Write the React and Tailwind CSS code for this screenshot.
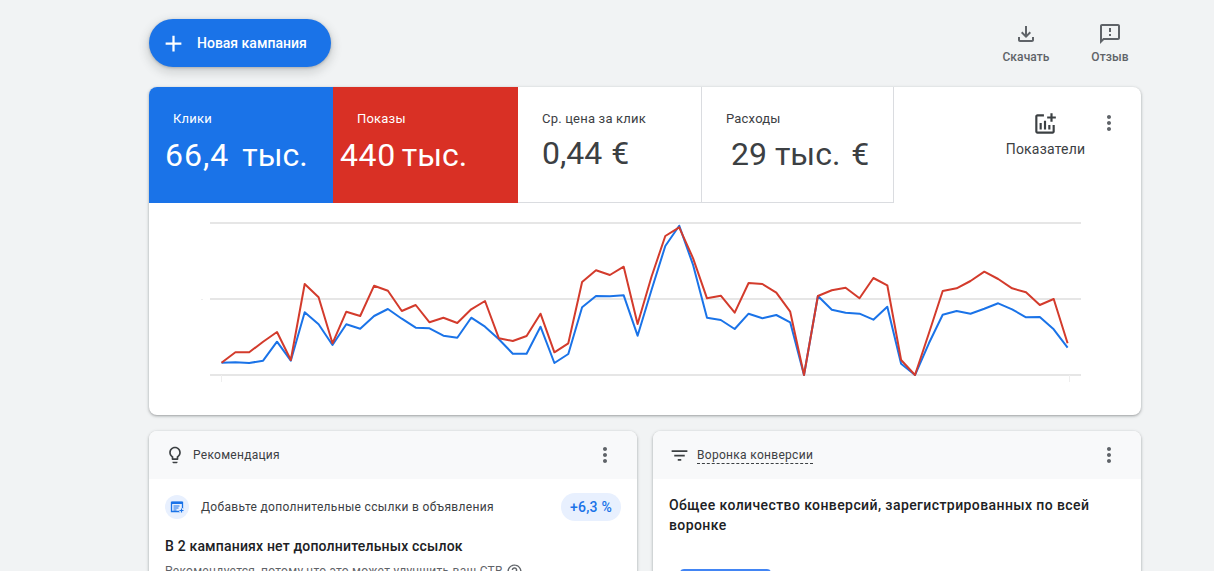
import React from "react";

const roboto = "font-['Roboto',sans-serif]";

// chart values, x index -> y in px from the top of the svg
const redLine = [458,427,427,395,366,450,222,262,400,305,318,227,242,303,285,337,323,339,298,273,385,393,378,311,427,400,216,181,195,170,342,200,78,52,145,265,257,308,219,222,248,305,495,258,241,233,265,204,226,450,495,370,243,235,213,185,207,235,247,285,267,400];
const blueLine = [458,457,459,452,395,452,307,343,405,343,356,318,297,326,353,355,377,383,323,350,388,431,431,350,459,432,292,258,259,256,377,240,108,47,165,323,330,357,311,325,315,337,495,258,299,308,311,329,290,461,495,400,314,303,311,296,280,298,322,321,358,413];

const toPoints = (vals) =>
  vals.map((v, i) => `${(72.5 + i * 13.87).toFixed(1)},${(7 + v / 3).toFixed(1)}`).join(" ");

const MoreIcon = () => (
  <svg viewBox="0 0 24 24" className="w-6 h-6 fill-[#5f6368]">
    <path d="M12 8c1.1 0 2-.9 2-2s-.9-2-2-2-2 .9-2 2 .9 2 2 2zm0 2c-1.1 0-2 .9-2 2s.9 2 2 2 2-.9 2-2-.9-2-2-2zm0 6c-1.1 0-2 .9-2 2s.9 2 2 2 2-.9 2-2-.9-2-2-2z" />
  </svg>
);

const Metric = ({ label, value, unit, className, valueClass, numClass }) => (
  <div className={`h-[116px] shrink-0 flex flex-col ${className}`}>
    <div className="mt-[23px] pl-6 text-[13px] leading-[18px] tracking-[0.2px]">{label}</div>
    <div className={`text-[32px] leading-[40px] whitespace-nowrap flex ${valueClass}`}>
      <span className={numClass}>{value}</span>
      <span>{unit}</span>
    </div>
  </div>
);

const Chart = () => (
  <svg viewBox="0 0 992 212" className="w-[992px] h-[212px] block">
    <g stroke="#e6e6e6" strokeWidth="2">
      <line x1="61" y1="20" x2="932" y2="20" />
      <line x1="61" y1="96" x2="932" y2="96" />
      <line x1="61" y1="172" x2="932" y2="172" />
    </g>
    <g stroke="#eeeeee" strokeWidth="1">
      <line x1="72.5" y1="172" x2="72.5" y2="179" />
      <line x1="920.5" y1="172" x2="920.5" y2="179" />
      <line x1="52" y1="96.5" x2="54" y2="96.5" />
    </g>
    <polyline points={toPoints(blueLine)} fill="none" stroke="#1a73e8" strokeWidth="2" strokeLinejoin="round" />
    <polyline points={toPoints(redLine)} fill="none" stroke="#d33b2c" strokeWidth="2" strokeLinejoin="round" />
  </svg>
);

const SmallCard = ({ header, children }) => (
  <div className="w-[488px] h-[200px] bg-white rounded-lg shadow-[0_1px_2px_rgba(60,64,67,0.3),0_1px_3px_1px_rgba(60,64,67,0.15)] overflow-hidden shrink-0">
    <div className="h-12 bg-[#f8f9fa] flex items-center pl-4 pr-5">
      {header}
      <div className="ml-auto"><MoreIcon /></div>
    </div>
    {children}
  </div>
);

export default function App() {
  return (
    <div className={`h-[571px] w-[1214px] overflow-hidden bg-[#f1f3f4] pl-[149px] ${roboto}`}>
      <div className="w-[992px]">
        {/* top row */}
        <div className="h-[87px] flex items-start">
          <button className="mt-[19px] h-12 w-[182px] rounded-full bg-[#1a73e8] text-white flex items-center pl-[11px] shadow-[0_1px_3px_rgba(60,64,67,0.3),0_4px_8px_3px_rgba(60,64,67,0.15)]">
            <svg viewBox="0 0 24 24" className="w-[27px] h-[27px] fill-white shrink-0">
              <path d="M19 13h-6v6h-2v-6H5v-2h6V5h2v6h6v2z" />
            </svg>
            <span className="ml-[10px] text-[14px] font-medium">Новая кампания</span>
          </button>
          <div className="ml-auto flex mt-[22px] text-[12px] font-medium text-[#5f6368]">
            <div className="w-[106px] flex flex-col items-center">
              <svg viewBox="0 0 24 24" className="w-6 h-6 fill-[#5f6368]">
                <path d="M18 15v3H6v-3H4v3c0 1.1.9 2 2 2h12c1.1 0 2-.9 2-2v-3h-2zm-1-4l-1.41-1.41L13 12.17V4h-2v8.17L8.41 9.59 7 11l5 5 5-5z" />
              </svg>
              <span className="mt-[2px] leading-[18px] tracking-[0.1px]">Скачать</span>
            </div>
            <div className="w-[62px] flex flex-col items-center">
              <svg viewBox="0 0 24 24" className="w-6 h-6 fill-[#5f6368]">
                <path d="M20 2H4c-1.1 0-1.99.9-1.99 2L2 22l4-4h14c1.1 0 2-.9 2-2V4c0-1.1-.9-2-2-2zm0 14H5.17L4 17.17V4h16v12zm-9-4h2v2h-2zm0-6h2v4h-2z" />
              </svg>
              <span className="mt-[2px] leading-[18px] tracking-[0.1px]">Отзыв</span>
            </div>
          </div>
        </div>

        {/* main card */}
        <div className="h-[328px] bg-white rounded-lg shadow-[0_1px_2px_rgba(60,64,67,0.3),0_1px_3px_1px_rgba(60,64,67,0.15)] overflow-hidden">
          <div className="flex h-[116px]">
            <Metric label="Клики" value="66,4" unit="тыс." className="w-[184px] bg-[#1a73e8] text-white" valueClass="mt-[7px] pl-[16px] gap-[13px]" numClass="tracking-[1px]" />
            <Metric label="Показы" value="440" unit="тыс." className="w-[185px] bg-[#d93025] text-white" valueClass="mt-[7px] pl-[7px] gap-[6px]" numClass="tracking-[0.6px]" />
            <Metric label="Ср. цена за клик" value="0,44" unit="€" className="w-[183px] text-[#3c4043] border-b border-[#dadce0]" valueClass="mt-[5px] pl-6 gap-[9px]" />
            <Metric label="Расходы" value="29 тыс." unit="€" className="w-[193px] text-[#3c4043] border-x border-b border-[#dadce0]" valueClass="mt-[6px] pl-[29px] gap-[11px]" />
            <div className="flex-1 relative flex flex-col items-center pl-[56px]">
              <svg viewBox="0 0 24 24" className="mt-[24px] -ml-[2px] w-[26px] h-[26px] fill-[#3c4043]">
                <path d="M22 5v2h-3v3h-2V7h-3V5h3V2h2v3h3zm-3 14H5V5h6V3H5c-1.1 0-2 .9-2 2v14c0 1.1.9 2 2 2h14c1.1 0 2-.9 2-2v-6h-2v6zm-4-6v4h2v-4h-2zm-4 4h2V9h-2v8zm-2 0v-6H7v6h2z" />
              </svg>
              <span className="mt-[2px] text-[14px] leading-5 tracking-[0.2px] text-[#3c4043]">Показатели</span>
              <div className="absolute right-[20px] top-[24px]"><MoreIcon /></div>
            </div>
          </div>
          <Chart />
        </div>

        {/* bottom cards */}
        <div className="mt-4 flex gap-4">
          <SmallCard
            header={
              <>
                <svg viewBox="0 0 24 24" className="w-5 h-5 fill-[#3c4043]">
                  <path d="M9 21c0 .55.45 1 1 1h4c.55 0 1-.45 1-1v-1H9v1zm3-19C8.14 2 5 5.14 5 9c0 2.38 1.19 4.47 3 5.74V17c0 .55.45 1 1 1h6c.55 0 1-.45 1-1v-2.26c1.81-1.27 3-3.36 3-5.74 0-3.86-3.14-7-7-7zm2.85 11.1l-.85.6V16h-4v-2.3l-.85-.6C7.8 12.16 7 10.63 7 9c0-2.76 2.24-5 5-5s5 2.24 5 5c0 1.63-.8 3.16-2.15 4.1z" />
                </svg>
                <span className="ml-2 text-[12px] tracking-[0.27px] text-[#3c4043]">Рекомендация</span>
              </>
            }
          >
            <div className="px-4">
              <div className="mt-[14px] h-7 flex items-center">
                <div className="w-6 h-6 rounded-full bg-[#e8f0fe] flex items-center justify-center">
                  <svg viewBox="0 0 16 16" className="w-4 h-4">
                    <path d="M2.5 3.5h11v9h-11z" fill="none" stroke="#1a73e8" strokeWidth="1.3" />
                    <path d="M2.5 2.5h11v2.5h-11z" fill="#1a73e8" />
                    <path d="M4.5 7h6M4.5 9h5M4.5 11h3" stroke="#1a73e8" strokeWidth="1" />
                    <path d="M10 11.5h5M12.5 9v5" stroke="#e8f0fe" strokeWidth="2.6" />
                    <path d="M10.5 11.5h4M12.5 9.5v4" stroke="#1a73e8" strokeWidth="1.1" />
                  </svg>
                </div>
                <span className="ml-3 text-[12px] tracking-[0.32px] text-[#3c4043]">Добавьте дополнительные ссылки в объявления</span>
                <span className="ml-auto h-7 w-[60px] rounded-full bg-[#e8f0fe] flex items-center justify-center text-[14px] font-medium tracking-[0.2px] text-[#1a73e8]">+6,3 %</span>
              </div>
              <div className="mt-[15px] text-[14px] leading-5 font-medium tracking-[0.18px] text-[#202124]">В 2 кампаниях нет дополнительных ссылок</div>
              <div className="mt-[6px] flex items-center text-[12px] leading-[18px] tracking-[0.28px] text-[#5f6368]">
                Рекомендуется, потому что это может улучшить ваш CTR
                <svg viewBox="0 0 24 24" className="ml-[3px] w-[17px] h-[17px] fill-[#5f6368]">
                  <path d="M11 18h2v-2h-2v2zm1-16C6.48 2 2 6.48 2 12s4.48 10 10 10 10-4.48 10-10S17.52 2 12 2zm0 18c-4.41 0-8-3.59-8-8s3.59-8 8-8 8 3.59 8 8-3.59 8-8 8zm0-14c-2.21 0-4 1.79-4 4h2c0-1.1.9-2 2-2s2 .9 2 2c0 2-3 1.75-3 5h2c0-2.25 3-2.5 3-5 0-2.21-1.79-4-4-4z" />
                </svg>
              </div>
            </div>
          </SmallCard>
          <SmallCard
            header={
              <>
                <svg viewBox="0 0 24 24" className="w-[21px] h-[21px] fill-[#3c4043]">
                  <path d="M10 18h4v-2h-4v2zM3 6v2h18V6H3zm3 7h12v-2H6v2z" />
                </svg>
                <span className="ml-[7px] text-[12px] leading-4 tracking-[0.3px] text-[#3c4043] border-b border-dashed border-[#3c4043]">Воронка конверсии</span>
              </>
            }
          >
            <div className="px-4">
              <div className="mt-4 text-[14px] leading-5 font-medium tracking-[0.41px] text-[#202124]">
                Общее количество конверсий, зарегистрированных по всей воронке
              </div>
              <div className="mt-[34px] ml-[11px] w-[91px] h-9 rounded bg-[#4285f4]" />
            </div>
          </SmallCard>
        </div>
      </div>
    </div>
  );
}
